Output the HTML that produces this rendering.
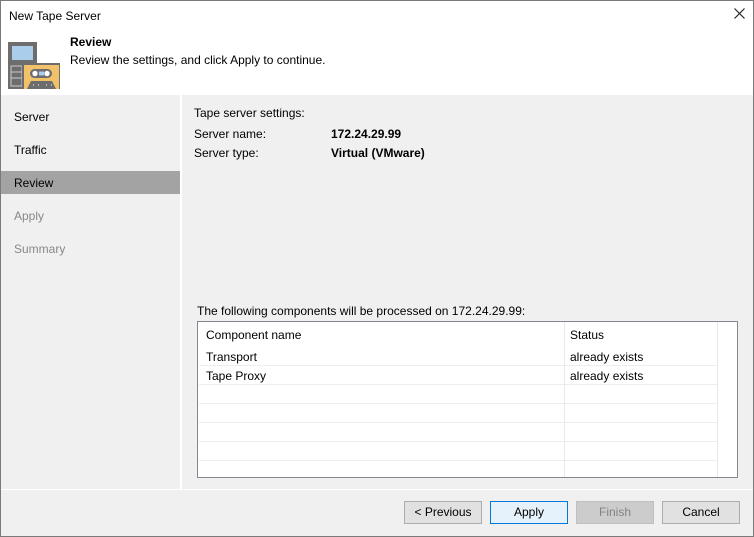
<!DOCTYPE html>
<html><head><style>
*{margin:0;padding:0;box-sizing:border-box}
body{width:754px;height:537px;overflow:hidden;font-family:"Liberation Sans",sans-serif;font-size:12px;color:#000;background:#f0f0f0;position:relative}
.abs{position:absolute}
.frame{left:0;top:0;width:754px;height:537px;border:1px solid #7a7a7a}
.btn{position:absolute;top:501px;width:78px;height:23px;border:1px solid #adadad;background:#e1e1e1;text-align:center;line-height:21px}
.row{position:absolute;left:1px;width:518px;height:1px;background:#ededed}
</style></head><body>
<div class="abs" style="left:0;top:0;width:754px;height:95px;background:#fff"></div>
<div class="abs" style="left:9px;top:9px">New Tape Server</div>
<svg class="abs" style="left:734px;top:8px" width="11" height="11"><path d="M0.5 0.5L10.5 10.5M10.5 0.5L0.5 10.5" stroke="#222" stroke-width="1.2"/></svg>
<svg class="abs" style="left:8px;top:42px" width="52" height="48">
<rect x="0" y="0" width="29" height="47" fill="#6d6d6d"/>
<rect x="4" y="4" width="21" height="14" fill="#a9cdea"/>
<rect x="3" y="24" width="11" height="20" fill="#6d6d6d" stroke="#ccc" stroke-width="1"/>
<path d="M3 30H14M3 36H14" stroke="#ccc"/>
<rect x="14" y="21" width="38" height="26" fill="#6d6d6d"/>
<rect x="16" y="23" width="35" height="24" fill="#f1c26a"/>
<rect x="22" y="27" width="22" height="9" rx="4.5" fill="#6d6d6d"/>
<circle cx="27" cy="31.5" r="2.7" fill="#fff"/><circle cx="39" cy="31.5" r="2.7" fill="#fff"/>
<rect x="31" y="29.5" width="5" height="4" fill="#a9cdea"/>
<path d="M19 47 L23 39 H44 L48 47Z" fill="#6d6d6d"/>
<path d="M25 43h1M30 43h1M38 43h1M43 43h1" stroke="#fff"/>
</svg>
<div class="abs" style="left:70px;top:35px;font-weight:bold">Review</div>
<div class="abs" style="left:70px;top:53px">Review the settings, and click Apply to continue.</div>
<div class="abs" style="left:180px;top:95px;width:2px;height:394px;background:#fff"></div>
<div class="abs" style="left:14px;top:110px">Server</div>
<div class="abs" style="left:14px;top:143px">Traffic</div>
<div class="abs" style="left:1px;top:171px;width:179px;height:23px;background:#a3a3a3"></div>
<div class="abs" style="left:14px;top:176px">Review</div>
<div class="abs" style="left:14px;top:209px;color:#888">Apply</div>
<div class="abs" style="left:14px;top:242px;color:#888">Summary</div>
<div class="abs" style="left:194px;top:106px">Tape server settings:</div>
<div class="abs" style="left:194px;top:127px">Server name:</div>
<div class="abs" style="left:331px;top:127px;font-weight:bold">172.24.29.99</div>
<div class="abs" style="left:194px;top:146px">Server type:</div>
<div class="abs" style="left:331px;top:146px;font-weight:bold">Virtual (VMware)</div>
<div class="abs" style="left:197px;top:304px">The following components will be processed on 172.24.29.99:</div>
<div class="abs" style="left:197px;top:321px;width:541px;height:157px;border:1px solid #828790;background:#fff">
 <div class="abs" style="left:8px;top:6px">Component name</div>
 <div class="abs" style="left:372px;top:6px">Status</div>
 <div class="abs" style="left:8px;top:28px">Transport</div>
 <div class="abs" style="left:372px;top:28px">already exists</div>
 <div class="abs" style="left:8px;top:47px">Tape Proxy</div>
 <div class="abs" style="left:372px;top:47px">already exists</div>
 <div class="row" style="top:43px"></div><div class="row" style="top:62px"></div>
 <div class="row" style="top:81px"></div><div class="row" style="top:100px"></div>
 <div class="row" style="top:119px"></div><div class="row" style="top:138px"></div>
 <div class="abs" style="left:366px;top:0;width:1px;height:155px;background:#e8e8e8"></div>
 <div class="abs" style="left:519px;top:0;width:1px;height:155px;background:#e8e8e8"></div>
</div>
<div class="abs" style="left:1px;top:489px;width:752px;height:1px;background:#fff"></div>
<div class="btn" style="left:404px">&lt; Previous</div>
<div class="btn" style="left:490px;border-color:#0078d7;background:#e5f1fb">Apply</div>
<div class="btn" style="left:576px;border-color:#bfbfbf;background:#cccccc;color:#838383">Finish</div>
<div class="btn" style="left:662px">Cancel</div>
<div class="abs frame"></div>
</body></html>
